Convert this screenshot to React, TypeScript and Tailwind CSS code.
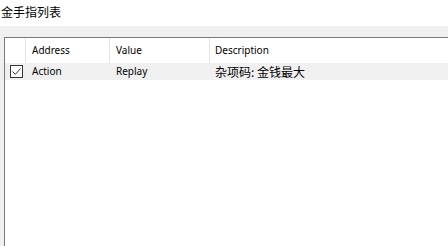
import React from 'react';

const cjk = "font-['Noto_Sans_CJK_SC','Noto_Sans',sans-serif]";
const ui = "font-['Noto_Sans','Noto_Sans_CJK_SC',sans-serif]";

const CheckBox: React.FC = () => (
  <div className="w-[13px] h-[13px] border border-[#333333] bg-white flex items-center justify-center">
    <svg width="11" height="11" viewBox="0 0 11 11">
      <path d="M1.5 5.5 L4.3 8.3 L9.5 2.5" fill="none" stroke="#333333" strokeWidth="1" />
    </svg>
  </div>
);

const App: React.FC = () => {
  return (
    <div className="w-[448px] h-[246px] overflow-hidden bg-white flex flex-col text-[#000000]">
      <div className={`h-[26px] shrink-0 pl-[1px] pt-[4px] text-[12px] leading-[16px] ${cjk}`}>金手指列表</div>
      <div className="flex-1 bg-[#f0f0f0] pt-[11px] pl-[4px] flex flex-col">
        <div className="flex-1 bg-white border-l border-t border-[#7a7a7a] flex flex-col">
          {/* header */}
          <div className={`flex h-[25px] shrink-0 text-[10px] ${ui}`}>
            <div className="w-[21px] border-r border-[#e5e5e5]" />
            <div className="w-[84px] border-r border-[#e5e5e5] pl-[6px] flex items-center">Address</div>
            <div className="w-[100px] border-r border-[#e5e5e5] pl-[6px] flex items-center">Value</div>
            <div className="flex-1 pl-[5px] flex items-center">Description</div>
          </div>
          {/* row */}
          <div className="flex h-[17px] bg-[#f0f0f0] items-center">
            <div className="w-[21px] pl-[5px] flex items-center">
              <CheckBox />
            </div>
            <div className={`w-[84px] pl-[6px] text-[10px] ${ui}`}>Action</div>
            <div className={`w-[100px] pl-[6px] text-[10px] ${ui}`}>Replay</div>
            <div className={`flex-1 pl-[5px] text-[12px] leading-[16px] ${cjk}`}>杂项码: 金钱最大</div>
          </div>
        </div>
      </div>
    </div>
  );
};

export default App;
